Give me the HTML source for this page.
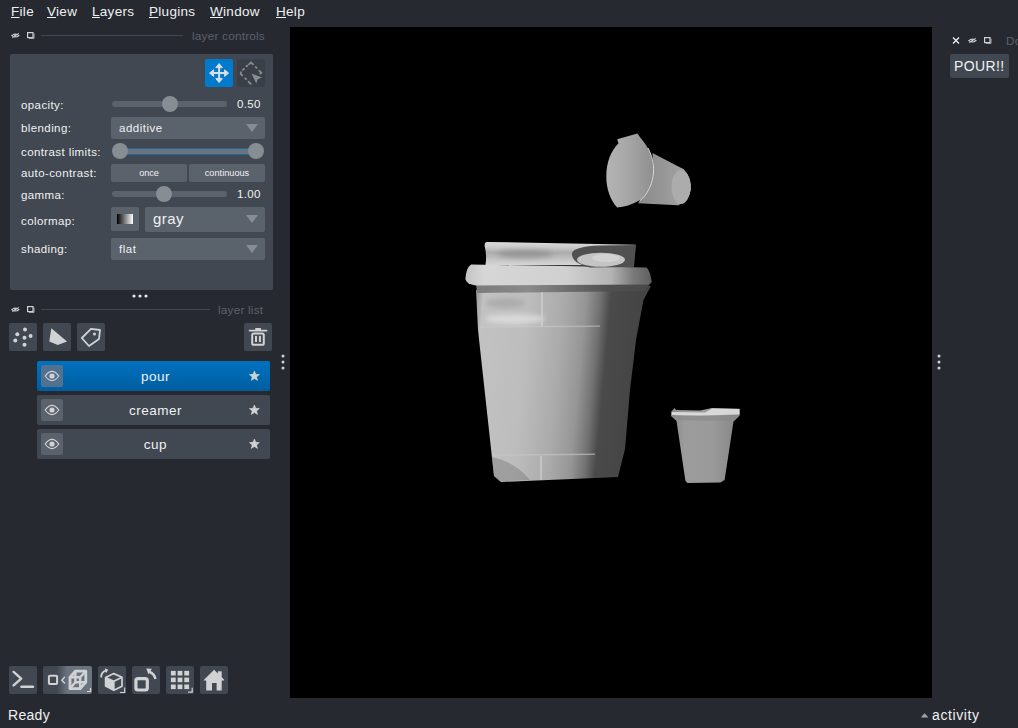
<!DOCTYPE html>
<html><head><meta charset="utf-8">
<style>
*{margin:0;padding:0;box-sizing:border-box}
html,body{width:1018px;height:728px;overflow:hidden;background:#262930;font-family:"Liberation Sans",sans-serif;color:#f0f1f2}
.a{position:absolute}
.menu span{position:absolute;top:4px;font-size:13.5px;line-height:16px;color:#f0f1f2;letter-spacing:0.3px}
.menu u{text-decoration:underline;text-underline-offset:1px;text-decoration-thickness:1px}
.ttl{font-size:11.8px;color:#5a626c;line-height:14px;letter-spacing:0.2px}
.line{height:1px;background:#414851}
.panel{background:#414851;border-radius:2px}
.lbl{position:absolute;left:21px;font-size:11.5px;line-height:14px;color:#f0f1f2;margin-top:1px;letter-spacing:0.4px}
.track{position:absolute;height:6px;background:#5a626c;border-radius:3px}
.knob{position:absolute;width:16px;height:16px;border-radius:8px;background:#868e93}
.combo{position:absolute;background:#5a626c;border-radius:2px}
.arrow{position:absolute;width:0;height:0;border-left:6.5px solid transparent;border-right:6.5px solid transparent;border-top:8px solid #868e93;margin-left:1px}
.btn{position:absolute;background:#414851;border-radius:2px}
.item{position:absolute;left:37px;width:233px;height:30px;border-radius:2px;background:#414851}
.item .eye{position:absolute;left:4px;top:4px;width:22px;height:22px;border-radius:2px;background:#5a626c}
.item .nm{position:absolute;left:2px;width:233px;top:8px;text-align:center;font-size:13.5px;line-height:16px;letter-spacing:0.5px}
</style></head><body>
<!-- menu -->
<div class="menu">
<span style="left:11px"><u>F</u>ile</span>
<span style="left:47px"><u>V</u>iew</span>
<span style="left:92px"><u>L</u>ayers</span>
<span style="left:149px"><u>P</u>lugins</span>
<span style="left:210px"><u>W</u>indow</span>
<span style="left:276px"><u>H</u>elp</span>
</div>

<!-- layer controls title -->
<svg class="a" style="left:11px;top:31px" width="9" height="8" viewBox="0 0 9 8"><path d="M0.8 4.6 Q4.4 1.6 8 4.6 Q4.4 7.4 0.8 4.6Z" fill="none" stroke="#d1d2d4" stroke-width="1.1"/><circle cx="4.4" cy="4.6" r="1" fill="#e0e0e0"/><path d="M1.2 6.8 L7.8 2.2" stroke="#d1d2d4" stroke-width="0.9"/></svg>
<svg class="a" style="left:27px;top:32px" width="8" height="7" viewBox="0 0 8 7"><rect x="0.6" y="0.6" width="5.4" height="5" fill="#262930" stroke="#d1d2d4" stroke-width="1.2"/><path d="M2 6.4 H7 V1.6" fill="none" stroke="#b0b2b6" stroke-width="1"/></svg>
<div class="a line" style="left:41px;top:35px;width:142px"></div>
<div class="a ttl" style="left:192px;top:29px">layer controls</div>

<div class="a panel" style="left:10px;top:54px;width:263px;height:236px"></div>
<!-- mode buttons -->
<div class="a" style="left:205px;top:59px;width:28px;height:28px;background:#007acc;border-radius:2px"></div>
<svg class="a" style="left:205px;top:59px" width="28" height="28" viewBox="0 0 28 28"><g fill="none" stroke="#dcdddf" stroke-width="2"><path d="M14.1 7 V21.2 M7 14.1 H21.2"/></g><g fill="#dcdddf" stroke="#dcdddf" stroke-width="1" stroke-linejoin="round"><path d="M14.1 4.6 L17.4 8.6 H10.8Z M14.1 23.6 L17.4 19.6 H10.8Z M4.6 14.1 L8.6 10.8 V17.4Z M23.6 14.1 L19.6 10.8 V17.4Z"/></g></svg>
<div class="a" style="left:237px;top:59px;width:28px;height:28px;background:#3b4048;border-radius:2px"></div>
<svg class="a" style="left:237px;top:59px" width="28" height="28" viewBox="0 0 28 28"><g fill="none" stroke="#868e93" stroke-width="1.8" stroke-linecap="round"><path d="M12 5.3 L14 3.4 L16 5.3 M18.7 8.1 L19.5 8.9 M22.4 11.9 L24.3 13.8 L23.4 14.7 M3.8 13.2 L3.8 15 L5.3 16.4 M6 10.9 L6.9 10 M9.5 7.4 L10.2 6.7 M8.2 19.3 L9 20.1 M11.6 22.8 L13.8 24.9"/></g><path d="M14.5 14.6 L25 18.6 L20.7 20.3 L19.3 24.6Z" fill="#868e93"/></svg>

<!-- rows -->
<div class="lbl" style="top:97px">opacity:</div>
<div class="track" style="left:112px;top:101px;width:115px"></div>
<div class="knob" style="left:162px;top:96px"></div>
<div class="a" style="left:237px;top:97px;font-size:11.5px;line-height:14px;letter-spacing:0.3px">0.50</div>

<div class="lbl" style="top:120px">blending:</div>
<div class="combo" style="left:111px;top:117px;width:154px;height:22px"></div>
<div class="a" style="left:119px;top:121px;font-size:11.5px;line-height:14px;letter-spacing:0.5px">additive</div>
<div class="arrow" style="left:245px;top:124px"></div>

<div class="lbl" style="top:144px">contrast limits:</div>
<div class="a" style="left:120px;top:148px;width:136px;height:7px;background:#6a7380;border-top:1px solid #1f6a94;border-bottom:1px solid #1f6a94"></div>
<div class="knob" style="left:112px;top:143px"></div>
<div class="knob" style="left:248px;top:143px"></div>

<div class="lbl" style="top:165px">auto-contrast:</div>
<div class="combo" style="left:111px;top:164px;width:76px;height:18px"></div>
<div class="combo" style="left:189px;top:164px;width:76px;height:18px"></div>
<div class="a" style="left:111px;top:167px;width:76px;text-align:center;font-size:9.2px;line-height:12px;letter-spacing:-0.1px">once</div>
<div class="a" style="left:189px;top:167px;width:76px;text-align:center;font-size:9.2px;line-height:12px;letter-spacing:0px">continuous</div>

<div class="lbl" style="top:187px">gamma:</div>
<div class="track" style="left:112px;top:191px;width:115px"></div>
<div class="knob" style="left:156px;top:186px"></div>
<div class="a" style="left:237px;top:187px;font-size:11.5px;line-height:14px;letter-spacing:0.3px">1.00</div>

<div class="lbl" style="top:213px">colormap:</div>
<div class="combo" style="left:111px;top:207px;width:28px;height:24px"></div>
<div class="a" style="left:117px;top:214px;width:16px;height:10px;background:linear-gradient(90deg,#000,#fff)"></div>
<div class="combo" style="left:145px;top:207px;width:120px;height:25px"></div>
<div class="a" style="left:153px;top:210px;font-size:15px;line-height:18px;letter-spacing:0.4px">gray</div>
<div class="arrow" style="left:245px;top:215px"></div>

<div class="lbl" style="top:241px">shading:</div>
<div class="combo" style="left:111px;top:238px;width:154px;height:22px"></div>
<div class="a" style="left:119px;top:242px;font-size:11.5px;line-height:14px;letter-spacing:0.5px">flat</div>
<div class="arrow" style="left:245px;top:245px"></div>

<!-- handle dots -->
<svg class="a" style="left:130px;top:293px" width="20" height="6"><circle cx="4" cy="3" r="1.6" fill="#e6e7e9"/><circle cx="10" cy="3" r="1.6" fill="#e6e7e9"/><circle cx="16" cy="3" r="1.6" fill="#e6e7e9"/></svg>

<!-- layer list title -->
<svg class="a" style="left:11px;top:305px" width="9" height="8" viewBox="0 0 9 8"><path d="M0.8 4.6 Q4.4 1.6 8 4.6 Q4.4 7.4 0.8 4.6Z" fill="none" stroke="#d1d2d4" stroke-width="1.1"/><circle cx="4.4" cy="4.6" r="1" fill="#e0e0e0"/><path d="M1.2 6.8 L7.8 2.2" stroke="#d1d2d4" stroke-width="0.9"/></svg>
<svg class="a" style="left:27px;top:306px" width="8" height="7" viewBox="0 0 8 7"><rect x="0.6" y="0.6" width="5.4" height="5" fill="#262930" stroke="#d1d2d4" stroke-width="1.2"/><path d="M2 6.4 H7 V1.6" fill="none" stroke="#b0b2b6" stroke-width="1"/></svg>
<div class="a line" style="left:41px;top:309px;width:169px"></div>
<div class="a ttl" style="left:218px;top:303px">layer list</div>

<!-- layer buttons -->
<div class="btn" style="left:9px;top:323px;width:28px;height:28px"></div>
<svg class="a" style="left:9px;top:323px" width="28" height="28"><g fill="#d1d2d4"><circle cx="16" cy="6.5" r="2"/><circle cx="8.3" cy="11.2" r="2"/><circle cx="21.6" cy="13" r="2"/><circle cx="15.5" cy="14.7" r="2"/><circle cx="6.3" cy="17.4" r="2"/><circle cx="15.5" cy="21.8" r="2"/></g></svg>
<div class="btn" style="left:43px;top:323px;width:28px;height:28px"></div>
<svg class="a" style="left:43px;top:323px" width="28" height="28"><path d="M8.3 5.3 L24 18.6 L14.8 22 L6.3 18.5Z" fill="#d1d2d4"/></svg>
<div class="btn" style="left:77px;top:323px;width:28px;height:28px"></div>
<svg class="a" style="left:77px;top:323px" width="28" height="28"><path d="M4.8 15 L14 5.8 L23 7 L22 16 L12 23Z" fill="none" stroke="#d1d2d4" stroke-width="1.8" stroke-linejoin="round"/><circle cx="17.5" cy="11" r="1.5" fill="#d1d2d4"/></svg>
<div class="btn" style="left:244px;top:323px;width:28px;height:28px"></div>
<svg class="a" style="left:244px;top:323px" width="28" height="28"><path d="M5.6 7.6 H22.6" stroke="#d1d2d4" stroke-width="1.8" stroke-linecap="round"/><rect x="11.2" y="4.9" width="5.8" height="2.6" rx="0.6" fill="#d1d2d4"/><rect x="8.2" y="10.6" width="11.6" height="11.2" rx="1.6" fill="none" stroke="#d1d2d4" stroke-width="2"/><rect x="11" y="12.9" width="2" height="6.1" fill="#d1d2d4"/><rect x="14.9" y="12.9" width="2" height="6.1" fill="#d1d2d4"/></svg>

<!-- splitter dots -->
<svg class="a" style="left:280px;top:353px" width="6" height="18"><circle cx="3" cy="3" r="1.5" fill="#d1d2d4"/><circle cx="3" cy="9" r="1.5" fill="#d1d2d4"/><circle cx="3" cy="15" r="1.5" fill="#d1d2d4"/></svg>

<!-- layer items -->
<div class="item" style="top:361px;background:linear-gradient(#0071bf,#005e9f)"><div class="eye" style="background:#527190"></div><div class="nm">pour</div></div>
<div class="item" style="top:395px"><div class="eye"></div><div class="nm">creamer</div></div>
<div class="item" style="top:429px"><div class="eye"></div><div class="nm">cup</div></div>
<svg class="a" style="left:37px;top:361px" width="233" height="100">
<defs><g id="eyei"><path d="M8.2 15 Q15 5.8 21.8 15 Q15 24.2 8.2 15Z" fill="none" stroke="#d1d2d4" stroke-width="1.2"/><circle cx="15" cy="15" r="2.6" fill="#d1d2d4"/>
<path d="M217.40 10.00 L218.75 13.34 L222.35 13.59 L219.59 15.91 L220.46 19.41 L217.40 17.50 L214.34 19.41 L215.21 15.91 L212.45 13.59 L216.05 13.34Z" fill="#d1d2d4" stroke="#d1d2d4" stroke-width="0.6" stroke-linejoin="round"/></g></defs>
<use href="#eyei" y="0"/><use href="#eyei" y="34"/><use href="#eyei" y="68"/>
</svg>

<!-- bottom buttons -->
<div class="btn" style="left:9px;top:666px;width:28px;height:28px"></div>
<svg class="a" style="left:9px;top:666px" width="28" height="28"><g fill="none" stroke="#d1d2d4" stroke-width="2.4" stroke-linecap="round" stroke-linejoin="round"><path d="M4.6 5.9 L12.2 12.7 L4.6 19.4"/><path d="M12.4 20.8 H24"/></g></svg>
<div class="btn" style="left:43px;top:666px;width:49px;height:28px;background:linear-gradient(90deg,#414851 0%,#414851 28%,#6a7380 50%,#6a7380 100%)"></div>
<svg class="a" style="left:43px;top:666px" width="49" height="28"><g fill="none" stroke="#d1d2d4" stroke-linejoin="round" stroke-linecap="round"><rect x="5.9" y="9.8" width="8.2" height="8.2" rx="1" stroke-width="2"/><path d="M21.5 11.3 L18.8 14.2 L21.5 17" stroke-width="1.5"/><path d="M27 11.3 L32.4 5.2 H42.8 V16.2 L37.2 22.6 H27Z" stroke-width="2.8"/><path d="M27 11.3 H37.2 V22.6 M37.2 11.3 L42.8 5.2 M32.4 5.2 V16.2 H42.8 M32.4 16.2 L27 22.6" stroke-width="2.4"/><path d="M47.5 22 V25.5 H44" stroke-width="1.2" stroke-linecap="butt"/></g></svg>
<div class="btn" style="left:98px;top:666px;width:28px;height:28px"></div>
<svg class="a" style="left:98px;top:666px" width="28" height="28"><path d="M7.6 11.5 L15.8 15.2 V24.2 L7.6 20Z" fill="#d1d2d4"/><g fill="none" stroke="#d1d2d4" stroke-width="1.7" stroke-linejoin="round"><path d="M7.6 11.5 L15.8 7.6 L24 11.2 V20.2 L15.8 24.2 L7.6 20Z"/><path d="M7.6 11.5 L15.8 15.2 L24 11.2 M15.8 15.2 V24.2"/></g><path d="M3.2 11.5 Q3 6 8 4.6" fill="none" stroke="#d1d2d4" stroke-width="1.8"/><path d="M6.8 2.2 L10.2 3.8 L8 7.2Z" fill="#d1d2d4"/><path d="M26.7 21.5 V26.5 H22" stroke="#d1d2d4" fill="none" stroke-width="1.2"/></svg>
<div class="btn" style="left:132px;top:666px;width:28px;height:28px"></div>
<svg class="a" style="left:132px;top:666px" width="28" height="28"><rect x="3.9" y="12.6" width="11.4" height="11.4" rx="2" fill="none" stroke="#d1d2d4" stroke-width="3.2"/><path d="M23.4 13 Q22.8 8.2 17.2 5.6" fill="none" stroke="#d1d2d4" stroke-width="2.6"/><path d="M14.2 2.4 L19.8 2.8 L16.6 8.6Z" fill="#d1d2d4"/></svg>
<div class="btn" style="left:166px;top:666px;width:28px;height:28px"></div>
<svg class="a" style="left:166px;top:666px" width="28" height="28"><g fill="#d1d2d4"><rect x="4.9" y="4.9" width="4.8" height="4.6"/><rect x="11.6" y="4.9" width="4.8" height="4.6"/><rect x="18.3" y="4.9" width="4.8" height="4.6"/><rect x="4.9" y="11.6" width="4.8" height="4.6"/><rect x="11.6" y="11.6" width="4.8" height="4.6"/><rect x="18.3" y="11.6" width="4.8" height="4.6"/><rect x="4.9" y="18.5" width="4.8" height="4.6"/><rect x="11.6" y="18.5" width="4.8" height="4.6"/><rect x="18.3" y="18.5" width="4.8" height="4.6"/></g><path d="M26.2 21.8 V26.2 H22" stroke="#d1d2d4" fill="none" stroke-width="1.2"/></svg>
<div class="btn" style="left:200px;top:666px;width:28px;height:28px"></div>
<svg class="a" style="left:200px;top:666px" width="28" height="28"><path d="M14.1 3.7 L17.8 7.4 V5.6 Q17.8 5.2 18.2 5.2 H21.3 Q21.7 5.2 21.7 5.6 V11.3 L24.2 13.8 Q24.5 14.4 23.9 14.4 H21.7 V23.9 Q21.7 24.4 21.2 24.4 H17.1 Q16.6 24.4 16.6 23.9 V17 H12 V23.9 Q12 24.4 11.5 24.4 H6.7 Q6.2 24.4 6.2 23.9 V14.4 H4 Q3.4 14.4 3.8 13.9Z" fill="#d1d2d4"/></svg>

<!-- status -->
<div class="a" style="left:8px;top:707px;font-size:14px;line-height:16px;letter-spacing:0.3px">Ready</div>
<svg class="a" style="left:920px;top:712px" width="10" height="7"><path d="M0.8 5.5 L4.6 1.2 L8.4 5.5Z" fill="#a0a4aa"/></svg>
<div class="a" style="left:932px;top:707px;font-size:14px;line-height:16px;letter-spacing:0.6px">activity</div>

<!-- canvas -->
<div class="a" style="left:290px;top:27px;width:642px;height:671px;background:#000"></div>
<svg class="a" style="left:0;top:0" width="1018" height="728">
<defs>
<filter id="bl" x="-50%" y="-100%" width="200%" height="300%"><feGaussianBlur stdDeviation="2.5"/></filter>
<linearGradient id="gb" x1="476" x2="652" y1="300" y2="316" gradientUnits="userSpaceOnUse">
<stop offset="0" stop-color="#9a9a9a"/><stop offset="0.04" stop-color="#c2c2c2"/><stop offset="0.3" stop-color="#bdbdbd"/><stop offset="0.5" stop-color="#aaaaaa"/><stop offset="0.62" stop-color="#959595"/><stop offset="0.7" stop-color="#727272"/><stop offset="0.76" stop-color="#4a4a4a"/><stop offset="1" stop-color="#434343"/>
</linearGradient>
<linearGradient id="gf" x1="465" x2="652" y1="0" y2="0" gradientUnits="userSpaceOnUse">
<stop offset="0" stop-color="#c4c4c4"/><stop offset="0.1" stop-color="#d6d6d6"/><stop offset="0.55" stop-color="#d0d0d0"/><stop offset="0.78" stop-color="#b4b4b4"/><stop offset="0.9" stop-color="#7a7a7a"/><stop offset="1" stop-color="#5e5e5e"/>
</linearGradient>
<linearGradient id="gl" x1="0" x2="0" y1="242" y2="266" gradientUnits="userSpaceOnUse">
<stop offset="0" stop-color="#dadada"/><stop offset="0.2" stop-color="#cdcdcd"/><stop offset="0.45" stop-color="#acacac"/><stop offset="0.7" stop-color="#c2c2c2"/><stop offset="1" stop-color="#d8d8d8"/>
</linearGradient>
<linearGradient id="gsh" x1="476" x2="652" y1="0" y2="0" gradientUnits="userSpaceOnUse">
<stop offset="0" stop-color="#7a7a7a"/><stop offset="0.3" stop-color="#8a8a8a"/><stop offset="0.55" stop-color="#6a6a6a"/><stop offset="0.75" stop-color="#505050"/><stop offset="1" stop-color="#484848"/>
</linearGradient>
<linearGradient id="gs" x1="671" x2="740" y1="0" y2="0" gradientUnits="userSpaceOnUse">
<stop offset="0" stop-color="#888"/><stop offset="0.2" stop-color="#9c9c9c"/><stop offset="0.6" stop-color="#9a9a9a"/><stop offset="1" stop-color="#848484"/>
</linearGradient>
<linearGradient id="gr" x1="607" x2="654" y1="0" y2="0" gradientUnits="userSpaceOnUse">
<stop offset="0" stop-color="#b4b4b4"/><stop offset="0.5" stop-color="#a4a4a4"/><stop offset="1" stop-color="#8e8e8e"/>
</linearGradient>
<linearGradient id="gfb" x1="638" x2="691" y1="0" y2="0" gradientUnits="userSpaceOnUse">
<stop offset="0" stop-color="#8a8a8a"/><stop offset="0.6" stop-color="#9a9a9a"/><stop offset="1" stop-color="#a8a8a8"/>
</linearGradient>
</defs>
<!-- big cup body -->
<path d="M476 290 L651 286 L643.5 300 L636 340 L630 390 L625 449 L618 477 L501 482 L494 476 L478 330Z" fill="url(#gb)"/>
<g filter="url(#bl)"><ellipse cx="515" cy="319" rx="30" ry="5" fill="#e4e4e4" opacity="0.7"/><ellipse cx="505" cy="303" rx="20" ry="5" fill="#9a9a9a" opacity="0.5"/></g><path d="M476 283 L651.5 282 L645 291 L477 293Z" fill="url(#gsh)"/>
<path d="M492 455 L595 454.3" stroke="#c8c8c8" stroke-width="1.5" opacity="0.6"/>
<path d="M480 327 L600 326.3" stroke="#cccccc" stroke-width="1.5" opacity="0.5"/>
<path d="M542 292 L542 327" stroke="#d8d8d8" stroke-width="1"/>
<path d="M541 456 L541 480" stroke="#d8d8d8" stroke-width="1"/>
<path d="M492 457 Q515 462 530 480 L500 481.5 L494 476Z" fill="#808080" opacity="0.5"/>
<!-- flange -->
<path d="M471 264.5 L646.4 267.4 Q650 270 651.8 282.2 L648 284.5 L476 285.5 Q466 284 465.4 279 Q466 268 471 264.5Z" fill="url(#gf)"/>
<!-- lid -->
<path d="M487 241.9 L635.6 244.8 L632.7 265.5 L485.5 265 Q487 255 484.6 246 Q484.6 242 487 241.9Z" fill="url(#gl)"/>
<ellipse cx="525" cy="254" rx="28" ry="4" fill="#8a8a8a" opacity="0.7" filter="url(#bl)"/>
<path d="M572 253 Q574 246.5 600 245.5 L636 245 L634 267 L590 267.4 Q571 263 572 253Z" fill="#505050"/>
<ellipse cx="601" cy="259.8" rx="24" ry="7" fill="#c4c4c4"/>
<ellipse cx="606" cy="258" rx="14" ry="4" fill="#d2d2d2"/>
<!-- small cup -->
<path d="M671 412 L674.4 408 L676 410 L700 410.5 L712 408 L739.7 408.7 L739.7 415.6 L733.5 421.5 L724.6 480 L720.4 482.5 L687.5 483 L685.4 480.8 L676.5 421 L671 416Z" fill="url(#gs)"/>
<path d="M672 412 L705 412.5 L712 408.5 L739.5 409 L739.5 414.5 L700 415.5 L672 415Z" fill="#d8d8d8"/>
<path d="M672 416 L739 416 L734 421 L676 420Z" fill="#8a8a8a" opacity="0.7"/>
<!-- flying cup -->
<path d="M652.4 153 L683.7 169.3 Q692 178 690.9 190 Q689 200 678.5 205.2 L638 203.3 Q650 185 653.5 165Z" fill="url(#gfb)"/>
<ellipse cx="681" cy="187" rx="9.5" ry="17" fill="#acacac"/>
<path d="M617.2 139.3 L637.4 133.5 L640.6 138 C648 146 654 158 653.7 170 C653 185 646 196 639.3 200.6 C632 205 624 207 617.2 207.5 C610 200 606.3 188 606.3 177 C606.3 162 611 151 618.5 143.3 Z" fill="url(#gr)"/>
<path d="M648 148 C652 156 654 163 653.5 172 C653 184 647 195 640 200.6" fill="none" stroke="#d8d8d8" stroke-width="1"/>
</svg>

<!-- right dots -->
<svg class="a" style="left:936px;top:353px" width="6" height="18"><circle cx="3" cy="3" r="1.5" fill="#d1d2d4"/><circle cx="3" cy="9" r="1.5" fill="#d1d2d4"/><circle cx="3" cy="15" r="1.5" fill="#d1d2d4"/></svg>

<!-- right dock -->
<svg class="a" style="left:952px;top:37px" width="8" height="7"><path d="M1 0.5 L7 6.5 M7 0.5 L1 6.5" stroke="#f0f1f2" stroke-width="1.3"/></svg>
<svg class="a" style="left:968px;top:36px" width="9" height="8" viewBox="0 0 9 8"><path d="M0.8 4.6 Q4.4 1.6 8 4.6 Q4.4 7.4 0.8 4.6Z" fill="none" stroke="#d1d2d4" stroke-width="1.1"/><circle cx="4.4" cy="4.6" r="1" fill="#e0e0e0"/><path d="M1.2 6.8 L7.8 2.2" stroke="#d1d2d4" stroke-width="0.9"/></svg>
<svg class="a" style="left:984px;top:37px" width="8" height="7" viewBox="0 0 8 7"><rect x="0.6" y="0.6" width="5.4" height="5" fill="#262930" stroke="#d1d2d4" stroke-width="1.2"/><path d="M2 6.4 H7 V1.6" fill="none" stroke="#b0b2b6" stroke-width="1"/></svg>
<div class="a ttl" style="left:1006px;top:34px">Do</div>
<div class="a" style="left:950px;top:54px;width:59px;height:24px;background:#414851;border-radius:2px"></div>
<div class="a" style="left:954px;top:58px;font-size:14px;line-height:16px;letter-spacing:0.4px">POUR!!</div>
</body></html>
